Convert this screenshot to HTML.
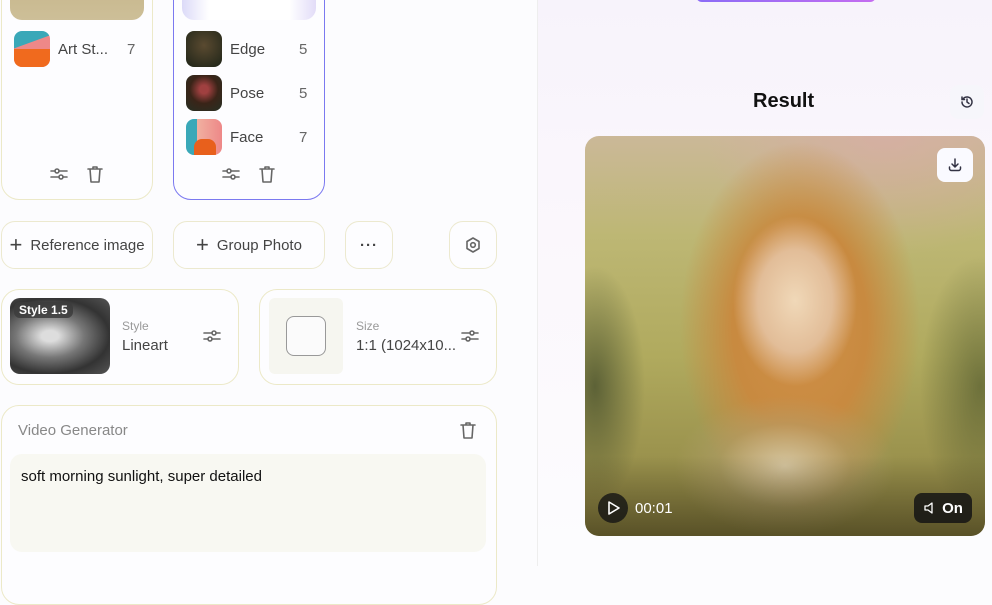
<!DOCTYPE html>
<html><head><meta charset="utf-8"><style>
*{box-sizing:border-box;margin:0;padding:0}
body{width:992px;height:566px;overflow:hidden;background:#fcfcfe;font-family:"Liberation Sans",sans-serif;position:relative;color:#333}
.a{position:absolute}
.card{position:absolute;border:1px solid #ece9c8;border-radius:18px;background:#fdfdff}
.ic{stroke:#666;fill:none;stroke-width:1.6;stroke-linecap:round;stroke-linejoin:round}
.row{position:absolute;display:flex;align-items:center;font-size:15px;color:#444}
.th{width:36px;height:36px;border-radius:8px}
.num{position:absolute;font-size:15px;color:#666}
.btn{position:absolute;border:1px solid #ece9cf;border-radius:14px;height:48px;top:221px;display:flex;align-items:center;justify-content:center;font-size:15px;color:#444;background:#fdfdff}
</style></head><body>
<div class="card" style="left:1px;top:-30px;width:152px;height:230px"></div>
<div class="a" style="left:10px;top:-10px;width:134px;height:30px;border-radius:0 0 12px 12px;background:linear-gradient(#c8b88e,#cdbf98)"></div>
<div class="row" style="left:14px;top:31px"><div class="th" style="background:linear-gradient(160deg,#3aa8b8 35%,#e88 36%);position:relative;overflow:hidden"><div style="position:absolute;left:0;bottom:0;width:36px;height:18px;background:#f06a1e"></div></div><span style="margin-left:8px">Art St...</span></div>
<div class="num" style="left:127px;top:41px">7</div>
<svg class="a" style="left:49px;top:164px" width="20" height="20" viewBox="0 0 20 20"><path class="ic" d="M2 7h16M2 13h16"/><circle cx="8" cy="7" r="2" fill="#fdfdff" stroke="#666" stroke-width="1.6"/><circle cx="12" cy="13" r="2" fill="#fdfdff" stroke="#666" stroke-width="1.6"/></svg>
<svg class="a" style="left:85px;top:164px" width="20" height="20" viewBox="0 0 20 20"><path class="ic" d="M3 5h14M8 5V3h4v2M5 5l1 13h8l1-13"/></svg>

<div class="card" style="left:173px;top:-30px;width:152px;height:230px;border:1.5px solid #7b79f0"></div>
<div class="a" style="left:182px;top:-10px;width:134px;height:30px;border-radius:0 0 12px 12px;background:linear-gradient(90deg,#dcdaf8,#fff 20%,#fff 80%,#e2dcf8)"></div>
<div class="row" style="left:186px;top:31px"><div class="th" style="background:radial-gradient(circle at 50% 40%,#5a4a30,#1e2418)"></div><span style="margin-left:8px">Edge</span></div>
<div class="num" style="left:299px;top:41px">5</div>
<div class="row" style="left:186px;top:75px"><div class="th" style="background:radial-gradient(circle at 50% 40%,#a04040 15%,#3a2418 50%,#263024)"></div><span style="margin-left:8px">Pose</span></div>
<div class="num" style="left:299px;top:85px">5</div>
<div class="row" style="left:186px;top:119px"><div class="th" style="background:linear-gradient(90deg,#3aa8b8 30%,#f0b0a0 31%,#e88);position:relative;overflow:hidden"><div style="position:absolute;left:8px;bottom:0;width:22px;height:16px;background:#e8601c;border-radius:8px 8px 0 0"></div></div><span style="margin-left:8px">Face</span></div>
<div class="num" style="left:299px;top:129px">7</div>
<svg class="a" style="left:221px;top:164px" width="20" height="20" viewBox="0 0 20 20"><path class="ic" d="M2 7h16M2 13h16"/><circle cx="8" cy="7" r="2" fill="#fdfdff" stroke="#666" stroke-width="1.6"/><circle cx="12" cy="13" r="2" fill="#fdfdff" stroke="#666" stroke-width="1.6"/></svg>
<svg class="a" style="left:257px;top:164px" width="20" height="20" viewBox="0 0 20 20"><path class="ic" d="M3 5h14M8 5V3h4v2M5 5l1 13h8l1-13"/></svg>

<div class="btn" style="left:1px;width:152px"><span style="font-size:22px;margin-right:8px;font-weight:300">+</span>Reference image</div>
<div class="btn" style="left:173px;width:152px"><span style="font-size:22px;margin-right:8px;font-weight:300">+</span>Group Photo</div>
<div class="btn" style="left:345px;width:48px;font-weight:bold;letter-spacing:1px">···</div>
<div class="btn" style="left:449px;width:48px"><svg width="18" height="18" viewBox="0 0 18 18"><path class="ic" d="M9 2l6 3.5v7L9 16l-6-3.5v-7z"/><circle cx="9" cy="9" r="2.3" class="ic"/></svg></div>

<div class="card" style="left:1px;top:289px;width:238px;height:96px"></div>
<div class="a" style="left:10px;top:298px;width:100px;height:76px;border-radius:10px;background:radial-gradient(ellipse at 40% 50%,#ddd 10%,#777 40%,#333 70%,#555)"></div>
<div class="a" style="left:14px;top:302px;background:rgba(60,60,60,.85);color:#fff;font-weight:bold;font-size:12px;padding:1px 5px;border-radius:6px">Style 1.5</div>
<div class="a" style="left:122px;top:319px;font-size:12px;color:#999">Style</div>
<div class="a" style="left:122px;top:337px;font-size:15px;color:#444">Lineart</div>
<svg class="a" style="left:202px;top:326px" width="20" height="20" viewBox="0 0 20 20"><path class="ic" d="M2 7h16M2 13h16"/><circle cx="12" cy="7" r="2" fill="#fdfdff" stroke="#666" stroke-width="1.6"/><circle cx="8" cy="13" r="2" fill="#fdfdff" stroke="#666" stroke-width="1.6"/></svg>

<div class="card" style="left:259px;top:289px;width:238px;height:96px"></div>
<div class="a" style="left:269px;top:298px;width:74px;height:76px;background:#f6f6f0;border-radius:6px"></div>
<div class="a" style="left:286px;top:316px;width:40px;height:40px;border:1.3px solid #999;border-radius:8px;background:#fbfbfb"></div>
<div class="a" style="left:356px;top:319px;font-size:12px;color:#999">Size</div>
<div class="a" style="left:356px;top:337px;font-size:15px;color:#444">1:1 (1024x10...</div>
<svg class="a" style="left:460px;top:326px" width="20" height="20" viewBox="0 0 20 20"><path class="ic" d="M2 7h16M2 13h16"/><circle cx="12" cy="7" r="2" fill="#fdfdff" stroke="#666" stroke-width="1.6"/><circle cx="8" cy="13" r="2" fill="#fdfdff" stroke="#666" stroke-width="1.6"/></svg>

<div class="card" style="left:1px;top:405px;width:496px;height:200px"></div>
<div class="a" style="left:18px;top:422px;font-size:15px;color:#888">Video Generator</div>
<svg class="a" style="left:458px;top:420px" width="20" height="20" viewBox="0 0 20 20"><path class="ic" d="M3 5h14M8 5V3h4v2M5 5l1 13h8l1-13"/></svg>
<div class="a" style="left:10px;top:454px;width:476px;height:98px;background:#f8f8f2;border-radius:12px"></div>
<div class="a" style="left:21px;top:468px;font-size:15px;color:#111">soft morning sunlight, super detailed</div>

<div class="a" style="left:537px;top:0;width:455px;height:566px;border-left:1px solid #eee;background:linear-gradient(#f7f3fb,#fbf7fc 40%,#fcfcfe 100%)"></div>
<div class="a" style="left:696px;top:-10px;width:180px;height:12px;border-radius:8px;background:linear-gradient(90deg,#8b6cf6,#c56cf0)"></div>
<div class="a" style="left:753px;top:90px;font-size:20px;font-weight:bold;color:#111">Result</div>
<div class="a" style="left:950px;top:85px;width:34px;height:34px;border-radius:9px;background:#f6f6fb;display:flex;align-items:center;justify-content:center"><svg width="16" height="16" viewBox="0 0 16 16"><path d="M3 8a5 5 0 1 0 1.5-3.6M3 3v2.5h2.5M8 5v3l2 1.5" fill="none" stroke="#334" stroke-width="1.5" stroke-linecap="round"/></svg></div>
<div class="a" style="left:585px;top:136px;width:400px;height:400px;border-radius:14px;overflow:hidden;background:linear-gradient(180deg,#cbb898 0%,#bdb774 25%,#b0aa5e 55%,#8a8040 100%)">
  <div class="a" style="left:0;top:0;width:400px;height:400px;background:radial-gradient(ellipse 180px 120px at 300px 0px,rgba(220,170,170,.6),rgba(0,0,0,0))"></div>
  <div class="a" style="left:0;top:0;width:400px;height:400px;background:radial-gradient(ellipse 150px 230px at 215px 190px,#d09048 0%,#c88a40 45%,rgba(190,130,50,0) 80%)"></div>
  <div class="a" style="left:0;top:0;width:400px;height:400px;background:radial-gradient(ellipse 62px 85px at 210px 165px,#f0d8b8 0%,#e2bd98 60%,rgba(0,0,0,0) 100%)"></div>
  <div class="a" style="left:0;top:0;width:400px;height:400px;background:radial-gradient(ellipse 110px 70px at 200px 330px,#d6c6a0 0%,rgba(180,160,110,.5) 60%,rgba(0,0,0,0) 100%)"></div>
  <div class="a" style="left:0;top:0;width:400px;height:400px;background:radial-gradient(ellipse 50px 120px at 10px 250px,rgba(60,70,40,.7),rgba(0,0,0,0))"></div>
  <div class="a" style="left:0;top:0;width:400px;height:400px;background:radial-gradient(ellipse 60px 130px at 395px 250px,rgba(70,80,40,.6),rgba(0,0,0,0))"></div>
  <div class="a" style="left:0;top:320px;width:400px;height:80px;background:linear-gradient(rgba(0,0,0,0),rgba(40,35,15,.5))"></div>
</div>
<div class="a" style="left:937px;top:148px;width:36px;height:34px;border-radius:8px;background:#fafaff;display:flex;align-items:center;justify-content:center"><svg width="16" height="16" viewBox="0 0 16 16"><path d="M8 2v8M5 7l3 3 3-3M2.5 10v1.5a2 2 0 0 0 2 2h7a2 2 0 0 0 2-2V10" fill="none" stroke="#334" stroke-width="1.5" stroke-linecap="round" stroke-linejoin="round"/></svg></div>
<div class="a" style="left:598px;top:493px;width:30px;height:30px;border-radius:50%;background:rgba(20,20,20,.8)"><svg width="30" height="30" viewBox="0 0 30 30"><path d="M11 9l10 6-10 6z" fill="none" stroke="#fff" stroke-width="1.6" stroke-linejoin="round"/></svg></div>
<div class="a" style="left:635px;top:500px;color:#fff;font-size:15px">00:01</div>
<div class="a" style="left:914px;top:493px;width:58px;height:30px;border-radius:8px;background:rgba(20,20,20,.85);color:#fff;font-size:15px;font-weight:bold;display:flex;align-items:center;justify-content:center"><svg width="14" height="14" viewBox="0 0 14 14" style="margin-right:5px"><path d="M2 5h3l4-3v10l-4-3H2z" fill="none" stroke="#fff" stroke-width="1.3" stroke-linejoin="round"/></svg>On</div>
</body></html>
